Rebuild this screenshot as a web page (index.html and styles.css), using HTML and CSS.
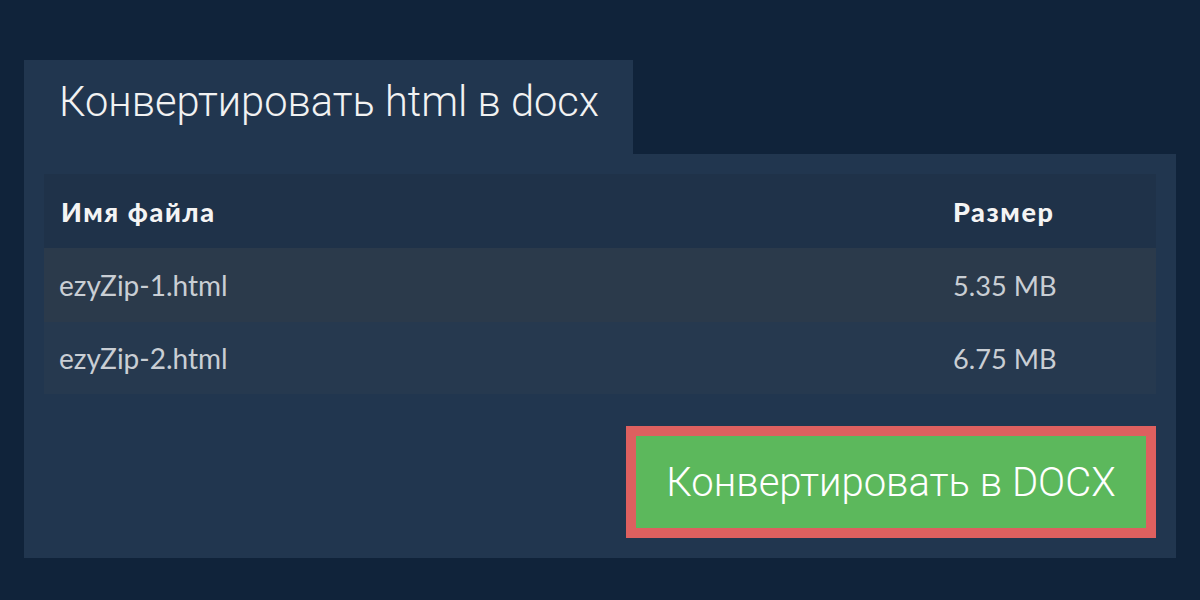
FILE: index.html
```html
<!DOCTYPE html>
<html lang="ru">
<head>
<meta charset="utf-8">
<title>Конвертировать html в docx</title>
<link rel="stylesheet" href="styles.css">
</head>
<body>
<div class="page">
  <div class="tab"><h1 class="title">Конвертировать html в docx</h1></div>
  <div class="panel">
    <div class="table">
      <div class="row head">
        <div class="cell">Имя файла</div>
        <div class="cell size">Размер</div>
      </div>
      <div class="row odd">
        <div class="cell">ezyZip-1.html</div>
        <div class="cell size">5.35 MB</div>
      </div>
      <div class="row even">
        <div class="cell">ezyZip-2.html</div>
        <div class="cell size">6.75 MB</div>
      </div>
    </div>
    <div class="actions">
      <button class="convert">Конвертировать в DOCX</button>
    </div>
  </div>
</div>
</body>
</html>
```

FILE: styles.css
```css
* { box-sizing: border-box; }
html, body { margin: 0; padding: 0; }
body {
  background: #10233a;
  width: 1200px;
  height: 600px;
  overflow: hidden;
  font-family: "Lato", "Liberation Sans", sans-serif;
}
.page {
  padding: 60px 24px 0 24px;
}
.tab {
  width: 609px;
  height: 94px;
  background: #21364f;
  display: flex;
  align-items: center;
  padding-left: 35px;
  padding-bottom: 10px;
}
.title {
  margin: 0;
  font-family: "Roboto", sans-serif;
  font-weight: 300;
  font-size: 41.6px;
  color: #f2f2f2;
  line-height: 1;
}
.panel {
  background: #21364f;
  padding: 20px;
  height: 404px;
}
.table {
  display: flex;
  flex-direction: column;
}
.row {
  display: grid;
  grid-template-columns: 1fr 203px;
  align-items: center;
  font-size: 27.5px;
}
.head {
  height: 74px;
  background: #1f3249;
  color: #f4f4f4;
  font-weight: 900;
  font-size: 27px;
  letter-spacing: 1.6px;
}
.odd {
  height: 74px;
  background: #2b3a4b;
  color: #c9ced4;
}
.even {
  height: 72px;
  background: #26394f;
  color: #c9ced4;
}
.cell {
  padding-left: 15px;
  font-size: 28px;
}
.head .cell { padding-left: 17px; font-size: 27px; }
.size { padding-left: 0; font-size: 27.2px; }
.head .size { padding-left: 0; }
.actions {
  display: flex;
  justify-content: flex-end;
  margin-top: 32px;
}
.convert {
  width: 530px;
  height: 112px;
  background: #5cb85c;
  border: 10px solid #de605f;
  color: #ffffff;
  font-family: "Roboto", sans-serif;
  font-weight: 300;
  font-size: 40px;
  padding: 0;
  cursor: pointer;
}
```
